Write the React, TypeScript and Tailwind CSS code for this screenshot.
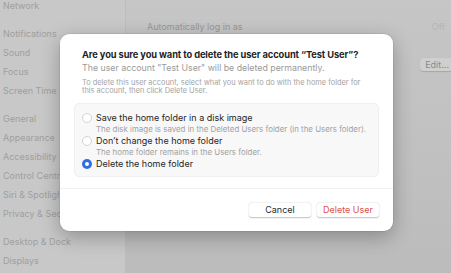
import { useState } from 'react';

const groups = [
  ['Network'],
  ['Notifications', 'Sound', 'Focus', 'Screen Time'],
  ['General', 'Appearance', 'Accessibility', 'Control Centre', 'Siri & Spotlight', 'Privacy & Security'],
  ['Desktop & Dock', 'Displays'],
];

const options = [
  {
    label: 'Save the home folder in a disk image',
    desc: 'The disk image is saved in the Deleted Users folder (in the Users folder).',
  },
  {
    label: 'Don\u2019t change the home folder',
    desc: 'The home folder remains in the Users folder.',
  },
  { label: 'Delete the home folder', desc: '' },
];

function Radio({ checked }: { checked: boolean }) {
  if (checked) {
    return (
      <span className="flex h-[10px] w-[10px] shrink-0 items-center justify-center rounded-full bg-[#2f6fe4]">
        <span className="h-[4px] w-[4px] rounded-full bg-white" />
      </span>
    );
  }
  return <span className="h-[10px] w-[10px] shrink-0 rounded-full border border-[#d4d4d4] bg-white" />;
}

export default function App() {
  const [choice, setChoice] = useState(2);

  return (
    <div
      className="relative flex h-[273px] w-[451px] overflow-hidden bg-[#c3c3c3]"
      style={{ fontFamily: 'Inter, "Liberation Sans", sans-serif' }}
    >
      {/* sidebar */}
      <div className="w-[126px] shrink-0 border-r border-[#bdbdbd] bg-[#c8c8c8]">
        <div className="-mt-[4px] flex flex-col gap-[9px] pl-[3px]">
          {groups.map((g, i) => (
            <div key={i} className="flex flex-col">
              {g.map((item) => (
                <div key={item} className="flex h-[19px] items-center whitespace-nowrap text-[9px] text-[#9f9f9f]">
                  {item}
                </div>
              ))}
            </div>
          ))}
        </div>
      </div>

      {/* main pane */}
      <div className="flex-1 bg-gradient-to-b from-[#c6c6c6] to-[#bcbcbc] pl-[21px]">
        <div className="mt-[20px] flex h-[14px] items-center justify-between text-[9px] text-[#979797]">
          <span>Automatically log in as</span>
          <span className="pr-[6px] text-[#b5b5b5]">Off</span>
        </div>
        <div className="mt-[24px] flex justify-end">
          <span className="-mr-[4px] flex h-[13px] items-center rounded-[3px] bg-[#cfcfcf] pl-[5px] pr-[6px] text-[9px] text-[#8a8a8a] shadow-[0_0.5px_1px_rgba(0,0,0,0.15)]">
            Edit...
          </span>
        </div>
      </div>

      {/* dialog */}
      <div className="absolute left-[60px] top-[34px] flex h-[197px] w-[333px] flex-col rounded-[9px] bg-white shadow-[0_6px_20px_rgba(0,0,0,0.28),0_0_0_0.5px_rgba(0,0,0,0.12)]">
        <div className="px-[22px] pt-[15px]">
          <div className="whitespace-nowrap text-[9.3px] font-bold leading-[12px] tracking-[-0.1px] text-[#1f1f1f]">
            Are you sure you want to delete the user account “Test User”?
          </div>
          <div className="mt-[1px] text-[8.8px] leading-[11px] text-[#9a9a9a]">
            The user account "Test User" will be deleted permanently.
          </div>
          <div className="mt-[6px] text-[7.4px] leading-[8px] text-[#a3a3a3]">
            To delete this user account, select what you want to do with the home folder for this account, then click Delete User.
          </div>
        </div>

        <div className="mx-[14px] mt-[8px] flex h-[74px] flex-col rounded-[5px] border border-[#efefef] bg-[#f8f8f8] px-[7px] pt-[8px]">
          {options.map((o, i) => (
            <div key={i} className="flex flex-col" onClick={() => setChoice(i)}>
              <div className="flex h-[12px] items-center gap-[4px] text-[9px] text-[#262626]">
                <Radio checked={choice === i} />
                <span>{o.label}</span>
              </div>
              {o.desc && (
                <div className="flex h-[11px] items-center pl-[14px] text-[7.9px] text-[#a2a2a2]">{o.desc}</div>
              )}
            </div>
          ))}
        </div>

        <div className="mt-auto border-t border-[#f0f0f0] px-[14px] pb-[14px] pt-[14px]">
          <div className="flex justify-end gap-[6px]">
            <button className="flex h-[14px] w-[62px] items-center justify-center rounded-[3px] bg-white text-[9px] text-[#2a2a2a] shadow-[0_0.5px_1.5px_rgba(0,0,0,0.25)]">
              Cancel
            </button>
            <button className="flex h-[14px] w-[62px] items-center justify-center rounded-[3px] bg-white text-[9px] text-[#d9534a] shadow-[0_0.5px_1.5px_rgba(0,0,0,0.25)]">
              Delete User
            </button>
          </div>
        </div>
      </div>
    </div>
  );
}
